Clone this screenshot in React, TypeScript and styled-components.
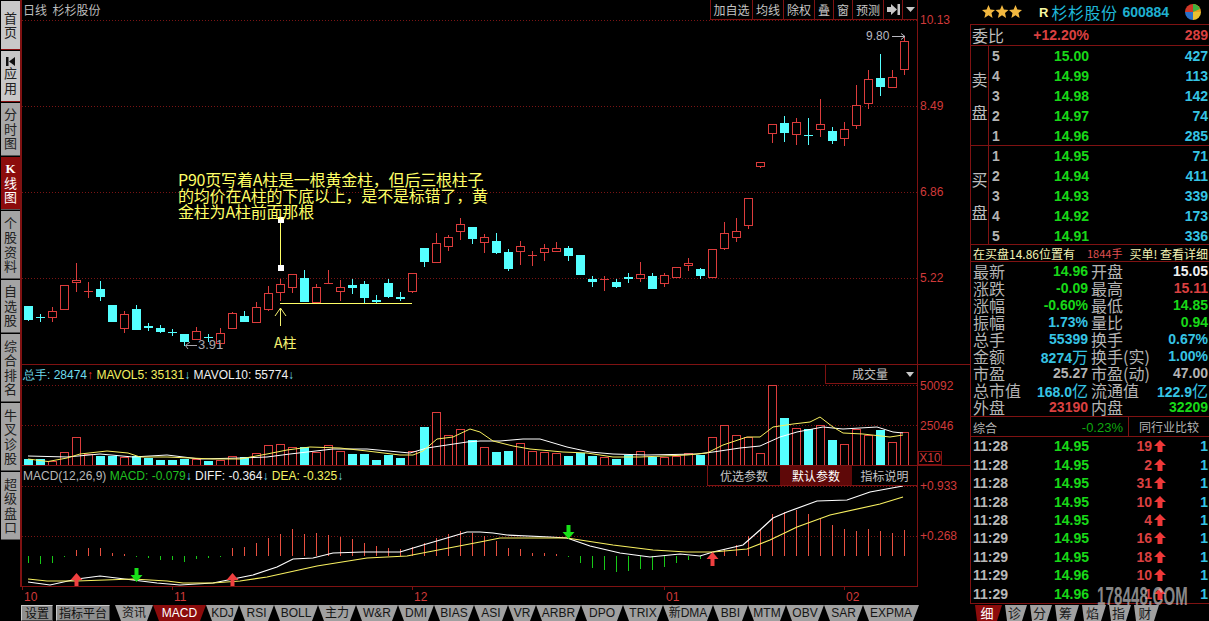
import React from 'react';
import styled, { createGlobalStyle } from 'styled-components';

const LINE = '#7f1212';
const GRID = '#7a1414';
const RED = '#dc3c3c';
const CYAN = '#55ffff';
const SANS = '"Liberation Sans", Arial, sans-serif';
const CJK = '"Noto Sans CJK SC", "Liberation Sans", sans-serif';

const Global = createGlobalStyle`
  html, body { margin: 0; padding: 0; background: #000; }
  * { box-sizing: border-box; }
`;

const Page = styled.div`
  width: 1209px; height: 621px; background: #000; display: flex; overflow: hidden;
  font-family: ${CJK}; color: #c0c0c0;
`;
const LeftWrap = styled.div`width: 970px; display: flex; flex-direction: column;`;
const TopRow = styled.div`display: flex; height: 587px;`;
const Sidebar = styled.nav`
  width: 22px; height: 587px; padding: 1px 0 0 1px; display: flex; flex-direction: column; gap: 1px;
  border-right: 2px solid ${LINE};
`;
const SideTab = styled.div<{ $h: number; $tone: 'light' | 'mid' | 'active' | 'dim' }>`
  width: 19px; height: ${p => p.$h}px; display: flex; flex-direction: column; align-items: center; justify-content: center;
  font-size: 13px; line-height: 14.5px; text-align: center; word-break: break-all;
  border-bottom: 1px solid ${p => (p.$tone === 'light' ? '#8a1010' : '#555')};
  background: ${p => ({ light: '#c8c8c8', mid: '#a8a8a8', active: '#8c0c0c', dim: '#a4a4a4' }[p.$tone])};
  color: ${p => (p.$tone === 'active' ? '#fff' : '#222')};
`;
const SideText = styled.span`width: 13px; display: block;`;
const KMark = styled.b`font-family: "Liberation Serif", serif; font-size: 13px; line-height: 14px;`;

const Charts = styled.div`width: 948px; display: flex; flex-direction: column;`;
const Pane = styled.section<{ $h: number; $ruled?: boolean }>`
  height: ${p => p.$h}px; display: flex; ${p => (p.$ruled ? `border-bottom: 1px solid ${LINE};` : '')}
`;
const ChartArea = styled.div<{ $base?: boolean }>`
  width: 896px; position: relative; border-right: 1px solid ${LINE};
  ${p => (p.$base ? `border-bottom: 1px solid ${LINE};` : '')}
  svg.plot { display: block; }
`;
const Axis = styled.div<{ $pad: number; $row: number }>`
  width: 52px; padding-top: ${p => p.$pad}px; display: grid; grid-auto-rows: ${p => p.$row}px; align-content: start;
  font: 12px/14px ${SANS}; color: #d03a3a; padding-left: 2px;
`;
const Title = styled.div`
  position: absolute; left: 1px; top: 2px; font-size: 12px; line-height: 16px; color: #bdbdbd; white-space: pre;
`;
const ToolBar = styled.div`
  position: absolute; right: -1px; top: 0; height: 20px; display: flex;
  border: 1px solid ${LINE}; border-top: 0; background: #000;
`;
const ToolBtn = styled.div<{ $w: number }>`
  width: ${p => p.$w}px; display: flex; align-items: center; justify-content: center;
  font-size: 12px; color: #c4c4c4; border-left: 1px solid ${LINE}; white-space: nowrap;
  &:first-child { border-left: 0; }
`;
const Note = styled.div`
  position: absolute; left: 156px; top: 171px; font-size: 16px; line-height: 16px; color: #ffff66; white-space: nowrap;
  letter-spacing: -.2px;
`;
const ATag = styled.div`
  position: absolute; left: 252px; top: 334px; font-size: 14px; line-height: 16px; color: #f4f070;
`;
const Low = styled.div`
  position: absolute; left: 176px; top: 338px; font: 13px/14px ${SANS}; color: #a8a8b0;
`;
const High = styled.div`
  position: absolute; left: 844px; top: 29px; font: 12px/14px ${SANS}; color: #b8b8c0;
`;
const Legend = styled.div<{ $top: number }>`
  position: absolute; left: 1px; top: ${p => p.$top}px; font: 12px/14px ${SANS}; white-space: pre;
`;
const Ink = styled.span<{ $c: string }>`color: ${p => p.$c};`;
const Trend = styled.b<{ $c: string }>`color: ${p => p.$c}; font-weight: bold;`;
const ScaleBox = styled.div`
  position: absolute; right: -1px; top: 0; width: 93px; height: 19px; border: 1px solid ${LINE}; border-top: 0;
  font-size: 12px; line-height: 18px; color: #c0c0c0; padding-left: 26px; background: #000;
  &::after { content: ''; position: absolute; right: 3px; top: 7px; border: 4px solid transparent; border-top: 5px solid #c8c8c8; border-bottom: 0; }
`;
const XBox = styled.div`
  position: absolute; left: 896px; bottom: 0; width: 24px; height: 14px; border: 1px solid ${LINE};
  font: 12px/13px ${SANS}; color: #d03a3a; text-align: center;
`;
const ParamBar = styled.div`
  position: absolute; right: -1px; top: 0; height: 20px; display: flex; border: 1px solid ${LINE}; border-top: 0; background: #000;
`;
const ParamBtn = styled.div<{ $w: number; $on?: boolean }>`
  width: ${p => p.$w}px; font-size: 12px; line-height: 19px; text-align: center;
  color: ${p => (p.$on ? '#fff' : '#c4c4c4')}; background: ${p => (p.$on ? '#5e0808' : 'transparent')};
`;
const DateRow = styled.div`height: 17px; display: flex; padding-left: 22px;`;
const DateCell = styled.div<{ $w: number }>`
  width: ${p => p.$w}px; position: relative; padding: 3px 0 0 2px; font: 12px/14px ${SANS}; color: #d03a3a;
  &::before { content: ''; position: absolute; left: 0; top: 0; width: 1px; height: 3px; background: ${LINE}; }
`;

const BottomTabs = styled.div`height: 17px; display: flex; padding-left: 21px; align-items: flex-end;`;
const PlainTab = styled.div<{ $w: number; $mr: number }>`
  width: ${p => p.$w}px; margin-right: ${p => p.$mr}px; height: 16px; background: #8e8e8e; color: #111;
  border: 1px solid #c8c8c8; border-right-color: #444; border-bottom-color: #444;
  font-size: 12px; line-height: 14px; text-align: center;
`;
const Trap = styled.div<{ $w: number; $on?: boolean }>`
  width: ${p => p.$w}px; height: 16px; background: ${p => (p.$on ? '#8c0c0c' : '#a0a0a0')};
  color: ${p => (p.$on ? '#fff' : '#151515')}; font: 12px/16px ${SANS}, ${CJK}; text-align: center; white-space: nowrap;
  clip-path: polygon(0 0, 100% 0, calc(100% - 6px) 100%, 6px 100%);
`;

const Panel = styled.aside`width: 239px; display: flex; flex-direction: column; position: relative;`;
const Head = styled.header`height: 24px; display: flex; align-items: center; padding-left: 12px;`;
const Stars = styled.svg`width: 40px; height: 14px; margin-right: 17px;`;
const RMark = styled.b`font: bold 13px ${SANS}; color: #f6f6a0; margin-right: 3px;`;
const Name = styled.span`font-size: 16px; letter-spacing: .5px; color: #1fb8d8; margin-right: 5px;`;
const Code = styled.b`font: bold 14px ${SANS}; color: #1fb0d0;`;
const Ball = styled.svg`width: 16px; height: 16px; margin-left: 16px;`;
const Board = styled.div`height: 580px; border: 1px solid ${LINE}; border-right: 0; display: flex; flex-direction: column;`;
const Ratio = styled.div`
  height: 21px; display: grid; grid-template-columns: 40px 77px 1fr; align-items: center; padding: 0 1px 0 1px;
  border-bottom: 1px solid ${LINE}; font: bold 14px ${SANS};
`;
const Wide = styled.span`font: 16px/1 ${CJK}; color: #bdbdbd;`;
const Num = styled.span<{ $c: string; $thin?: boolean }>`
  color: ${p => p.$c}; text-align: right; white-space: nowrap; font: ${p => (p.$thin ? 'normal' : 'bold')} 14px/1 ${SANS};
`;
const Level = styled.span`font: bold 14px/1 ${SANS}; color: #b4b4b4; text-align: left;`;
const Book = styled.div<{ $h: number }>`height: ${p => p.$h}px; display: flex; border-bottom: 1px solid ${LINE}; overflow: hidden;`;
const BookSide = styled.div`
  width: 18px; border-right: 1px solid ${LINE}; display: flex; flex-direction: column; align-items: center; justify-content: center; gap: 17px;
  font-size: 16px; line-height: 16px; color: #bdbdbd;
`;
const BookRows = styled.div`flex: 1; display: flex; flex-direction: column;`;
const BookRow = styled.div`
  height: 20px; flex: none; display: grid; grid-template-columns: 14px 83px 1fr; align-items: center; padding: 0 1px 0 3px;
`;
const Notice = styled.div`
  height: 17px; display: flex; align-items: center; padding-left: 2px; font-size: 12px; color: #f2f2b4; white-space: pre;
  border-bottom: 1px solid ${LINE};
`;
const NoticeLot = styled.span`font-size: 11px; color: #e05050; margin: 0 7px 0 12px;`;
const Stats = styled.div`height: 155px; display: flex; flex-direction: column; border-bottom: 1px solid ${LINE};`;
const StatRow = styled.div`flex: 1; display: grid; grid-template-columns: 118px 120px;`;
const StatCell = styled.div`display: flex; justify-content: space-between; align-items: center; padding: 0 1px 0 2px;`;
const StatLabel = styled.span`font-size: 16px; line-height: 16px; color: #b4b4b4; white-space: nowrap;`;
const Unit = styled.span`font: 16px/1 ${CJK};`;
const Sector = styled.div`
  height: 20px; display: grid; grid-template-columns: 158px 1fr; border-bottom: 1px solid ${LINE}; font-size: 12px; color: #b4b4b4;
`;
const SectorLeft = styled.div`display: flex; justify-content: space-between; align-items: center; padding: 0 5px 0 2px; border-right: 1px solid ${LINE};`;
const SectorRight = styled.div`text-align: center; line-height: 20px;`;
const SectorPct = styled.span`font: 13px ${SANS}; color: #0fa80f;`;
const Ticks = styled.div`flex: 1; display: flex; flex-direction: column;`;
const TickRow = styled.div`
  flex: 1; display: grid; grid-template-columns: 58px 58px 63px 13px 1fr; align-items: center; padding: 0 1px 0 2px;
`;
const TickArrow = styled.svg`width: 12px; height: 12px; margin-left: 2px;`;
const Time = styled.span`font: bold 14px/1 ${SANS}; color: #b8b8b8;`;
const SideTabs = styled.div`height: 17px; display: flex; padding-left: 2px; align-items: flex-end;`;
const RTab = styled.div<{ $w: number; $on?: boolean }>`
  width: ${p => p.$w}px; height: 16px; font-size: 13px; line-height: 16px; text-align: center;
  background: ${p => (p.$on ? '#8c0c0c' : '#a0a0a0')}; color: ${p => (p.$on ? '#fff' : '#1a1a1a')};
  clip-path: polygon(3px 0, 100% 0, calc(100% - 5px) 100%, 5px 100%);
`;
const Mark = styled.div`
  position: absolute; left: 127px; top: 583px; font: bold 25px/26px ${SANS}; color: rgba(205, 205, 205, .68);
  transform: scaleX(.6); transform-origin: left; white-space: nowrap; letter-spacing: .3px;
`;

type C = [number, number, number, number, number];
const candles: C[] = [
  [0,306,306,320,321],[0,314,317,318,322],[1,307,311,317,322],[1,285,285,309,310],[1,263,280,282,292],[1,282,291,292,298],[0,281,289,297,301],[0,305,305,322,322],[1,311,314,328,333],[0,305,309,330,330],
  [0,323,326,328,331],[0,325,328,332,333],[0,329,332,333,336],[0,334,334,342,346],[1,327,331,339,340],[0,334,337,338,342],[1,328,333,343,348],[1,312,313,328,329],[0,311,316,322,322],[1,302,307,322,322],
  [1,286,293,309,311],[1,279,284,292,301],[1,274,274,287,293],[0,270,278,302,302],[1,284,287,302,303],[1,270,283,284,284],[1,280,287,291,301],[0,279,285,288,294],[0,281,284,298,303],[0,295,300,302,303],
  [0,279,283,297,298],[0,292,297,299,301],[1,273,273,291,293],[0,248,248,262,267],[1,233,243,262,263],[1,235,237,246,251],[1,218,224,231,240],[0,227,227,239,244],[1,234,237,242,253],[0,233,241,253,254],
  [0,249,252,269,271],[1,241,246,251,265],[1,251,255,256,266],[1,244,248,252,261],[1,242,248,251,251],[0,246,248,256,261],[0,255,255,275,275],[0,276,279,282,287],[1,276,279,280,291],[0,279,282,287,288],
  [0,273,277,279,283],[1,262,274,278,282],[0,273,276,289,289],[1,273,275,283,287],[1,267,267,277,277],[1,258,263,265,271],[0,268,269,276,279],[1,249,249,277,277],[1,222,233,248,250],[1,218,231,237,242],
  [1,198,198,225,229],[1,162,162,166,168],[1,124,124,133,143],[0,116,123,133,142],[1,118,122,134,145],[0,118,135,136,145],[1,99,124,129,137],[0,127,131,141,144],[1,122,129,138,146],[1,85,105,125,129],
  [1,70,79,103,109],[0,54,78,87,96],[1,70,77,87,87],[1,37,41,69,75],
];
const volTop = [459,459,461,452,437,454,456,456,457,456,458,460,460,459,459,461,460,456,457,453,445,444,447,447,452,445,451,454,454,460,455,458,451,427,412,435,429,440,447,452,451,443,451,452,453,456,453,456,457,459,455,451,457,457,456,453,455,437,425,435,437,453,385,418,428,429,425,440,444,429,435,430,442,432];
const macdTip = [563,564,563,557,550,548,548,553,554,557,558,560,560,562,559,558,557,548,547,543,538,534,529,534,533,535,537,539,543,546,548,549,547,543,538,534,531,533,536,541,548,549,553,553,554,557,563,568,570,572,571,569,570,567,563,560,559,552,549,545,536,530,514,512,510,514,519,525,529,531,529,531,533,530];
const ZERO = 556;
const px = (i: number) => 28.5 + 12 * i;
const pts = (a: number[][]) => a.map(p => p.join(',')).join(' ');

const volY = [[28,459],[48,461.5],[67,458],[80,454],[107,451],[128,453],[140,457],[167,457],[213,459],[240,459],[267,454],[287,450],[310,447],[340,448],[367,451],[400,455],[413,455],[423,451],[437,439],[453,437],[470,429],[480,432],[493,441],[513,446],[530,449],[563,452],[587,453],[613,457],[640,457],[687,455],[707,453],[723,445],[747,437],[760,437],[773,427],[793,424],[810,422],[820,417],[833,427],[843,433],[863,434],[890,437],[903,435]];
const volW = [[28,456],[67,457],[100,454],[133,457],[167,455],[200,459],[240,458],[267,457],[290,454],[333,449],[367,449],[410,453],[427,448],[467,442],[480,441],[500,441],[523,439],[540,439],[567,447],[590,452],[613,454],[647,455],[697,454],[713,452],[740,448],[760,446],[780,437],[797,432],[823,427],[843,429],[877,427],[893,432],[903,433]];
const macW = [[28,582],[50,585],[77,579],[100,576],[133,580],[157,583],[180,585],[213,583],[233,579],[253,575],[277,567],[293,559],[313,558],[333,553],[363,552],[400,552],[423,545],[447,538],[467,532],[480,532],[493,533],[507,535],[550,537],[567,538],[590,546],[620,553],[650,557],[680,554],[700,556],[713,552],[743,545],[760,530],[773,518],[787,512],[817,501],[847,500],[870,492],[903,486]];
const macY = [[28,579],[47,581],[77,581],[133,579],[167,581],[183,583],[213,583],[240,581],[267,577],[317,566],[367,558],[407,556],[433,551],[480,542],[500,538],[523,538],[567,538],[613,545],[653,550],[687,552],[713,552],[747,549],[770,540],[797,527],[830,515],[880,504],[903,497]];

const Gridlines = ({ ys }: { ys: number[] }) => (
  <g stroke={GRID} strokeDasharray="1 2">
    {ys.map(y => <line key={y} x1={22} x2={917} y1={y + .5} y2={y + .5} />)}
  </g>
);

const Arrow = ({ x, y, up, c }: { x: number; y: number; up: boolean; c: string }) => (
  <polygon fill={c} points={up
    ? `${x},${y} ${x + 6},${y + 7} ${x + 2},${y + 7} ${x + 2},${y + 14} ${x - 2},${y + 14} ${x - 2},${y + 7} ${x - 6},${y + 7}`
    : `${x - 2},${y} ${x + 2},${y} ${x + 2},${y + 7} ${x + 6},${y + 7} ${x},${y + 14} ${x - 6},${y + 7} ${x - 2},${y + 7}`} />
);

const sidebar: [string, number, 'light' | 'mid' | 'active' | 'dim'][] = [
  ['首页', 49, 'light'], ['应用', 51, 'light'], ['分时图', 53, 'mid'], ['K线图', 53, 'active'], ['个股资料', 68, 'dim'],
  ['自选股', 53, 'dim'], ['综合排名', 68, 'dim'], ['牛叉诊股', 68, 'dim'], ['超级盘口', 68, 'dim'],
];
const tabs: [string, number][] = [['资讯',38],['MACD',53],['KDJ',33],['RSI',35],['BOLL',44],['主力',38],['W&R',42],['DMI',36],['BIAS',40],['ASI',34],['VR',28],['ARBR',45],['DPO',42],['TRIX',40],['新DMA',50],['BBI',35],['MTM',38],['OBV',38],['SAR',39],['EXPMA',56]];
const G = '#18d818', B = '#36c4e4', R = '#da4040', W = '#f0f0f0', S = '#b4b4b4';
const sell = [['5','15.00','427'],['4','14.99','113'],['3','14.98','142'],['2','14.97','74'],['1','14.96','285']];
const buy = [['1','14.95','71'],['2','14.94','411'],['3','14.93','339'],['4','14.92','173'],['5','14.91','336']];
type V = [string, string, string?];
const stats: [string, V, string, V][] = [
  ['最新',['14.96',G],'开盘',['15.05',W]], ['涨跌',['-0.09',G],'最高',['15.11',R]], ['涨幅',['-0.60%',G],'最低',['14.85',G]],
  ['振幅',['1.73%',B],'量比',['0.94',G]], ['总手',['55399',B],'换手',['0.67%',B]], ['金额',['8274',B,'万'],'换手(实)',['1.00%',B]],
  ['市盈',['25.27',S],'市盈(动)',['47.00',S]], ['总市值',['168.0',B,'亿'],'流通值',['122.9',B,'亿']], ['外盘',['23190',R],'内盘',['32209',G]],
];
const ticks = [['11:28','14.95','19'],['11:28','14.95','2'],['11:28','14.95','31'],['11:28','14.95','10'],['11:28','14.95','4'],['11:29','14.95','16'],['11:29','14.95','18'],['11:29','14.96','10'],['11:29','14.96','1']];

const star = (x: number) => `${x + 6.5},0 ${x + 8.4},4.6 ${x + 13},5 ${x + 9.5},8 ${x + 10.6},13 ${x + 6.5},10.3 ${x + 2.4},13 ${x + 3.5},8 ${x},5 ${x + 4.6},4.6`;

export default function App() {
  return (
    <Page>
      <Global />
      <LeftWrap>
        <TopRow>
          <Sidebar>
            {sidebar.map(([t, h, tone]) => (
              <SideTab key={t} $h={h} $tone={tone}>
                {t === '应用' && (
                  <svg width="10" height="9" viewBox="0 0 10 9"><rect x="0" y="0" width="2.5" height="9" fill="#111" /><polygon points="9,0 9,9 3,4.5" fill="#111" /></svg>
                )}
                {t === 'K线图'
                  ? <><KMark>K</KMark><SideText>线图</SideText></>
                  : <SideText>{t}</SideText>}
              </SideTab>
            ))}
          </Sidebar>
          <Charts>
            <Pane $h={365} $ruled>
              <ChartArea>
                <svg className="plot" width="895" height="364" viewBox="22 0 895 364" shapeRendering="crispEdges">
                  <Gridlines ys={[20, 106, 192, 278]} />
                  {candles.map(([up, hi, top, bot, lo], i) => {
                    const x = px(i), c = up ? RED : CYAN;
                    return (
                      <g key={i}>
                        <line x1={x} x2={x} y1={hi} y2={lo} stroke={c} />
                        {up
                          ? (bot - top <= 1
                            ? <line x1={x - 4.5} x2={x + 4.5} y1={top + .5} y2={top + .5} stroke={c} />
                            : <rect x={x - 4} y={top + .5} width={8} height={bot - top} fill="#000" stroke={c} />)
                          : <rect x={x - 4.5} y={top} width={9} height={Math.max(bot - top, 1)} fill={c} />}
                      </g>
                    );
                  })}
                  <line x1={280.5} x2={280.5} y1={220} y2={268} stroke="#ffff66" />
                  <rect x={278} y={217} width={6} height={6} fill="#fff" />
                  <rect x={278} y={265} width={6} height={6} fill="#fff" />
                  <line x1={280} x2={412} y1={303.5} y2={303.5} stroke="#ffff66" />
                  <g shapeRendering="auto" fill="none" stroke="#f4f070">
                    <path d="M280.5 308V326M275 316L280.5 308L286 316" />
                    <path d="M186 345.5H197M190 342L185.5 345.5M188 349L185.5 345.5" stroke="#a8a8b0" />
                    <path d="M892 36.5H905M901 33.5L905 36.5L901 39.5" stroke="#b8b8c0" />
                  </g>
                </svg>
                <Title>{'日线  杉杉股份'}</Title>
                <ToolBar>
                  <ToolBtn $w={41}>加自选</ToolBtn>
                  <ToolBtn $w={31}>均线</ToolBtn>
                  <ToolBtn $w={31}>除权</ToolBtn>
                  <ToolBtn $w={19}>叠</ToolBtn>
                  <ToolBtn $w={19}>窗</ToolBtn>
                  <ToolBtn $w={31}>预测</ToolBtn>
                  <ToolBtn $w={19}>
                    <svg width="13" height="11" viewBox="0 0 13 11"><polygon points="0,3 4,3 4,0 10,5.5 4,11 4,8 0,8" fill="#c8c8c8" /><rect x="10.5" y="0" width="2.5" height="11" fill="#c8c8c8" /></svg>
                  </ToolBtn>
                  <ToolBtn $w={15}>
                    <svg width="9" height="5" viewBox="0 0 9 5"><polygon points="0,0 9,0 4.5,5" fill="#c8c8c8" /></svg>
                  </ToolBtn>
                </ToolBar>
                <Note>
                  <div>P90页写着A柱是一根黄金柱，但后三根柱子</div>
                  <div>的均价在A柱的下底以上，是不是标错了，黄</div>
                  <div>金柱为A柱前面那根</div>
                </Note>
                <ATag>A柱</ATag>
                <Low>3.91</Low>
                <High>9.80</High>
              </ChartArea>
              <Axis $pad={13} $row={86}>
                <span>10.13</span><span>8.49</span><span>6.86</span><span>5.22</span>
              </Axis>
            </Pane>
            <Pane $h={101} $ruled>
              <ChartArea>
                <svg className="plot" width="895" height="100" viewBox="22 365 895 100" shapeRendering="crispEdges">
                  <Gridlines ys={[385, 425]} />
                  {volTop.map((t, i) => {
                    const up = candles[i][0];
                    const x = px(i);
                    return up
                      ? <rect key={i} x={x - 4} y={t + .5} width={8} height={465 - t} fill="#000" stroke={RED} />
                      : <rect key={i} x={x - 4.5} y={t} width={9} height={465 - t} fill={CYAN} />;
                  })}
                  <g shapeRendering="auto" fill="none">
                    <polyline points={pts(volW)} stroke="#fff" />
                    <polyline points={pts(volY)} stroke="#f8f060" />
                  </g>
                </svg>
                <Legend $top={3}>
                  <Ink $c="#6fdcec">总手: 28474</Ink><Trend $c="#f03030">↑</Trend>
                  <Ink $c="#f4f060"> MAVOL5: 35131</Ink><Trend $c="#6fdcec">↓</Trend>
                  <Ink $c="#f0f0f0"> MAVOL10: 55774</Ink><Trend $c="#6fdcec">↓</Trend>
                </Legend>
                <ScaleBox>成交量</ScaleBox>
                <XBox>X10</XBox>
              </ChartArea>
              <Axis $pad={14} $row={40}>
                <span>50092</span><span>25046</span>
              </Axis>
            </Pane>
            <Pane $h={121}>
              <ChartArea $base>
                <svg className="plot" width="895" height="120" viewBox="22 466 895 120" shapeRendering="crispEdges">
                  <Gridlines ys={[486, 536]} />
                  {macdTip.map((t, i) => (
                    <line key={i} x1={px(i)} x2={px(i)} y1={ZERO} y2={t} stroke={t > ZERO ? '#18c818' : '#e85040'} />
                  ))}
                  <g shapeRendering="auto" fill="none">
                    <polyline points={pts(macW)} stroke="#fff" strokeWidth="1.2" />
                    <polyline points={pts(macY)} stroke="#f8f060" strokeWidth="1.2" />
                  </g>
                  <g shapeRendering="auto">
                    <Arrow x={76.5} y={573} up c="#f04040" />
                    <Arrow x={232.5} y={573} up c="#f04040" />
                    <Arrow x={712.5} y={552} up c="#f04040" />
                    <Arrow x={136.5} y={568} up={false} c="#18e018" />
                    <Arrow x={568.5} y={525} up={false} c="#18e018" />
                  </g>
                </svg>
                <Legend $top={3}>
                  <Ink $c="#b8b8b8">MACD(12,26,9) </Ink>
                  <Ink $c="#20c020">MACD: -0.079</Ink><Trend $c="#6fdcec">↓</Trend>
                  <Ink $c="#f0f0f0"> DIFF: -0.364</Ink><Trend $c="#6fdcec">↓</Trend>
                  <Ink $c="#f4f060"> DEA: -0.325</Ink><Trend $c="#6fdcec">↓</Trend>
                </Legend>
                <ParamBar>
                  <ParamBtn $w={72}>优选参数</ParamBtn>
                  <ParamBtn $w={72} $on>默认参数</ParamBtn>
                  <ParamBtn $w={65}>指标说明</ParamBtn>
                </ParamBar>
              </ChartArea>
              <Axis $pad={13} $row={50}>
                <span>+0.933</span><span>+0.268</span>
              </Axis>
            </Pane>
          </Charts>
        </TopRow>
        <DateRow>
          <DateCell $w={150}>10</DateCell>
          <DateCell $w={240}>11</DateCell>
          <DateCell $w={252}>12</DateCell>
          <DateCell $w={180}>01</DateCell>
          <DateCell $w={40}>02</DateCell>
        </DateRow>
        <BottomTabs>
          <PlainTab $w={32} $mr={3}>设置</PlainTab>
          <PlainTab $w={54} $mr={5}>指标平台</PlainTab>
          {tabs.map(([t, w]) => <Trap key={t} $w={w} $on={t === 'MACD'}>{t}</Trap>)}
        </BottomTabs>
      </LeftWrap>
      <Panel>
        <Head>
          <Stars viewBox="0 0 40 14">
            {[0, 13.5, 27].map(x => <polygon key={x} points={star(x)} fill="#f2b840" />)}
          </Stars>
          <RMark>R</RMark>
          <Name>杉杉股份</Name>
          <Code>600884</Code>
          <Ball viewBox="0 0 16 16">
            <path d="M8 8L8 0A8 8 0 0 1 16 8Z" fill="#e8a020" />
            <path d="M8 8L16 8A8 8 0 0 1 8 16Z" fill="#e8c030" />
            <path d="M8 8L8 16A8 8 0 0 1 0 8Z" fill="#2a70c8" />
            <path d="M8 8L0 8A8 8 0 0 1 8 0Z" fill="#d03828" />
            <path d="M8 0A8 8 0 0 1 15 5L8 8Z" fill="#40b040" />
          </Ball>
        </Head>
        <Board>
          <Ratio>
            <Wide>委比</Wide>
            <Num $c={R}>+12.20%</Num>
            <Num $c={R}>289</Num>
          </Ratio>
          <Book $h={100}>
            <BookSide><span>卖</span><span>盘</span></BookSide>
            <BookRows>
              {sell.map(([n, p, v]) => (
                <BookRow key={n}><Level>{n}</Level><Num $c={G}>{p}</Num><Num $c={B}>{v}</Num></BookRow>
              ))}
            </BookRows>
          </Book>
          <Book $h={99}>
            <BookSide><span>买</span><span>盘</span></BookSide>
            <BookRows>
              {buy.map(([n, p, v]) => (
                <BookRow key={n}><Level>{n}</Level><Num $c={G}>{p}</Num><Num $c={B}>{v}</Num></BookRow>
              ))}
            </BookRows>
          </Book>
          <Notice>在买盘14.86位置有<NoticeLot>1844手</NoticeLot>买单! 查看详细</Notice>
          <Stats>
            {stats.map(([l1, v1, l2, v2]) => (
              <StatRow key={l1}>
                <StatCell><StatLabel>{l1}</StatLabel><Num $c={v1[1]}>{v1[0]}{v1[2] && <Unit>{v1[2]}</Unit>}</Num></StatCell>
                <StatCell><StatLabel>{l2}</StatLabel><Num $c={v2[1]}>{v2[0]}{v2[2] && <Unit>{v2[2]}</Unit>}</Num></StatCell>
              </StatRow>
            ))}
          </Stats>
          <Sector>
            <SectorLeft><span>综合</span><SectorPct>-0.23%</SectorPct></SectorLeft>
            <SectorRight>同行业比较</SectorRight>
          </Sector>
          <Ticks>
            {ticks.map(([t, p, v], i) => (
              <TickRow key={i}>
                <Time>{t}</Time>
                <Num $c={G}>{p}</Num>
                <Num $c={R}>{v}</Num>
                <TickArrow viewBox="0 0 12 12"><polygon points="6,0 12,6 8.5,6 8.5,12 3.5,12 3.5,6 0,6" fill="#f03838" /></TickArrow>
                <Num $c={B}>1</Num>
              </TickRow>
            ))}
          </Ticks>
        </Board>
        <SideTabs>
          <RTab $w={30} $on>细</RTab><RTab $w={25}>诊</RTab><RTab $w={25}>分</RTab><RTab $w={27}>筹</RTab><RTab $w={27}>焰</RTab><RTab $w={25}>指</RTab><RTab $w={28}>财</RTab>
        </SideTabs>
        <Mark>178448.COM</Mark>
      </Panel>
    </Page>
  );
}
